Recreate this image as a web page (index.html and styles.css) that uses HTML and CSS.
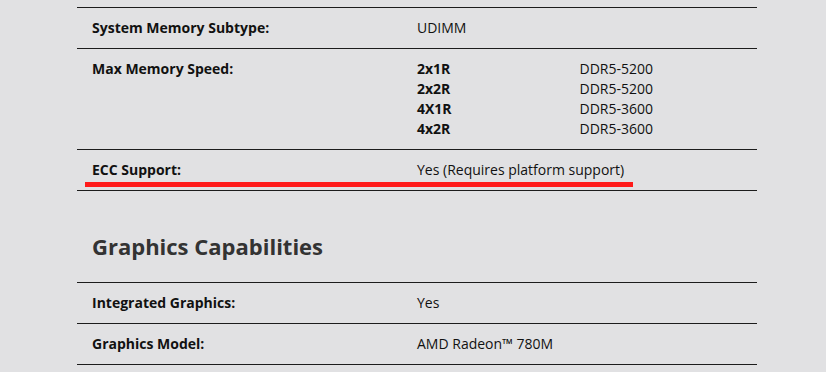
FILE: index.html
```html
<!DOCTYPE html>
<html lang="en">
<head>
<meta charset="utf-8">
<title>Specifications</title>
<link rel="stylesheet" href="styles.css">
</head>
<body>
<div class="page">
  <div class="spec-table">
    <div class="spec-row">
      <div class="spec-label">System Memory Subtype:</div>
      <div class="spec-value">UDIMM</div>
    </div>
    <div class="spec-row">
      <div class="spec-label">Max Memory Speed:</div>
      <div class="spec-value">
        <div class="speed-grid">
          <span class="speed-config">2x1R</span><span>DDR5-5200</span>
          <span class="speed-config">2x2R</span><span>DDR5-5200</span>
          <span class="speed-config">4X1R</span><span>DDR5-3600</span>
          <span class="speed-config">4x2R</span><span>DDR5-3600</span>
        </div>
      </div>
    </div>
    <div class="spec-row marked">
      <div class="spec-label">ECC Support:</div>
      <div class="spec-value">Yes (Requires platform support)</div>
      <span class="highlight-bar"></span>
    </div>
  </div>

  <h2 class="section-title">Graphics Capabilities</h2>

  <div class="spec-table">
    <div class="spec-row">
      <div class="spec-label">Integrated Graphics:</div>
      <div class="spec-value">Yes</div>
    </div>
    <div class="spec-row">
      <div class="spec-label">Graphics Model:</div>
      <div class="spec-value">AMD Radeon™ 780M</div>
    </div>
  </div>
</div>
</body>
</html>
```
FILE: styles.css
```css
html, body {
  margin: 0;
  padding: 0;
  background: #e1e1e3;
}

body {
  font-family: "Open Sans", "Liberation Sans", sans-serif;
  font-size: 14px;
  line-height: 20px;
  color: #111;
}

.page {
  width: 680px;
  padding: 7px 0 0 77px;
}

.spec-table {
  border-bottom: 1px solid #1c1c1c;
}

.spec-row {
  position: relative;
  display: grid;
  grid-template-columns: 1fr 1fr;
  border-top: 1px solid #1c1c1c;
  padding: 10px 0;
}

.spec-label {
  padding: 0 15px;
  font-weight: 700;
}

.spec-value {
  padding: 0 15px 0 0;
}

.speed-grid {
  display: grid;
  grid-template-columns: 1fr 1fr;
}

.speed-config {
  font-weight: 700;
}

/* red marker drawn under the ECC line */
.highlight-bar {
  position: absolute;
  left: 8px;
  top: 32px;
  width: 548px;
  height: 5px;
  background: #ff1a1a;
}

.section-title {
  margin: 0;
  padding: 42px 15px 23px;
  font-size: 22px;
  line-height: 26px;
  font-weight: 700;
  color: #333;
}
```
